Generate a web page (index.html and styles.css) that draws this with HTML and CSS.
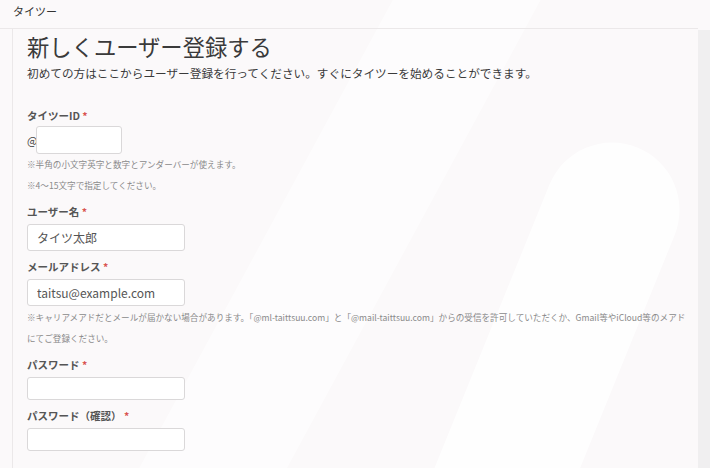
FILE: index.html
```html
<!DOCTYPE html>
<html lang="ja">
<head>
<meta charset="utf-8">
<title>タイツー</title>
<link rel="stylesheet" href="styles.css">
</head>
<body>
<div class="app">
  <div class="main">
    <header class="topbar">タイツー</header>
    <section class="card">
      <h1 class="title">新しくユーザー登録する</h1>
      <p class="lead">初めての方はここからユーザー登録を行ってください。すぐにタイツーを始めることができます。</p>
      <form class="form">
        <div class="field">
          <label class="label">タイツーID <span class="req">*</span></label>
          <div class="idrow"><span class="at">@</span><input class="input input-id" type="text"></div>
          <p class="note">※半角の小文字英字と数字とアンダーバーが使えます。</p>
          <p class="note">※4〜15文字で指定してください。</p>
        </div>
        <div class="field">
          <label class="label">ユーザー名 <span class="req">*</span></label>
          <input class="input input-tall" type="text" placeholder="タイツ太郎">
        </div>
        <div class="field">
          <label class="label">メールアドレス <span class="req">*</span></label>
          <input class="input input-tall" type="text" placeholder="taitsu@example.com">
          <p class="note note-wide">※キャリアメアドだとメールが届かない場合があります。「@ml-taittsuu.com」と「@mail-taittsuu.com」からの受信を許可していただくか、Gmail等やiCloud等のメアドにてご登録ください。</p>
        </div>
        <div class="field">
          <label class="label">パスワード <span class="req">*</span></label>
          <input class="input" type="password">
        </div>
        <div class="field">
          <label class="label">パスワード（確認） <span class="req">*</span></label>
          <input class="input" type="password">
        </div>
      </form>
    </section>
  </div>
  <aside class="side"></aside>
</div>
</body>
</html>
```

FILE: styles.css
```css
html, body {
  margin: 0;
  padding: 0;
  height: 100%;
}
body {
  background-color: #fbf9fa;
  background-image: url("data:image/svg+xml,%3Csvg xmlns='http://www.w3.org/2000/svg' width='710' height='468'%3E%3Cg stroke='%23ffffff' stroke-linecap='round' fill='none'%3E%3Cline x1='612' y1='210' x2='470' y2='560' stroke-width='135' stroke-opacity='0.8'/%3E%3Cline x1='510' y1='-80' x2='120' y2='640' stroke-width='130' stroke-opacity='0.55'/%3E%3C/g%3E%3C/svg%3E");
  background-repeat: no-repeat;
  font-family: "Noto Sans CJK JP", "Noto Sans", sans-serif;
  color: #333;
  overflow: hidden;
}
.app {
  display: flex;
  height: 468px;
}
.main {
  flex: 1;
  display: flex;
  flex-direction: column;
}
.side {
  width: 12px;
  margin-top: 30px;
  background: #f0eff0;
}
.topbar {
  height: 29px;
  box-sizing: border-box;
  padding: 3px 0 0 13px;
  font-size: 11px;
  line-height: 16px;
  color: #333;
  border-bottom: 1px solid #ebe8e9;
}
.card {
  flex: 1;
  margin-left: 12px;
  border-left: 1px solid #ebe8e9;
  padding: 2px 0 0 14px;
}
.title {
  margin: 0;
  font-size: 22.3px;
  font-weight: 400;
  line-height: 30px;
  color: #3a3a3a;
}
.lead {
  margin: 2px 0 0;
  font-size: 11.65px;
  line-height: 20px;
  color: #3a3a3a;
}
.form {
  margin-top: 25px;
  display: flex;
  flex-direction: column;
  gap: 8px;
}
.field {
  display: flex;
  flex-direction: column;
  align-items: flex-start;
}
.label {
  font-size: 10.5px;
  line-height: 16px;
  font-weight: 700;
  color: #555;
  margin-bottom: 4px;
}
.req {
  color: #d9534f;
}
.idrow {
  display: flex;
  align-items: center;
  margin-top: -2px;
}
.at {
  font-size: 11px;
  color: #444;
  width: 9px;
}
.input {
  box-sizing: border-box;
  width: 158px;
  height: 23px;
  border: 1px solid #dad8d9;
  border-radius: 3px;
  background: #fff;
  padding: 0 9px;
  font-family: "Noto Sans CJK JP", "Noto Sans", sans-serif;
  font-size: 12px;
  color: #444;
  margin: 0;
}
.input::placeholder {
  color: #555;
}
.input-tall {
  height: 27px;
}
.input-id {
  width: 86px;
  height: 28px;
}
.note {
  margin: 0;
  font-size: 8.6px;
  line-height: 21px;
  color: #8a8a8a;
}
.note-wide {
  margin-top: 1px;
  max-width: 664px;
}
```
